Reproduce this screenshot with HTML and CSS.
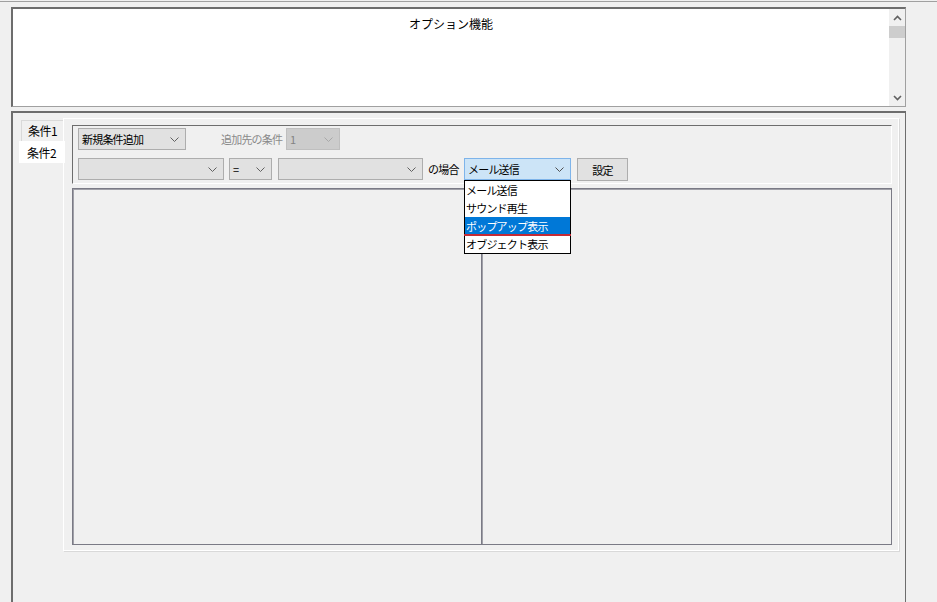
FILE: index.html
```html
<!DOCTYPE html>
<html lang="ja">
<head>
    <meta charset="UTF-8">
    <title>オプション機能</title>
    <link rel="stylesheet" href="styles.css">
</head>
<body>

<div class="top-line"></div>

<!-- Option text box -->
<div class="option-box">
    <div class="option-text">オプション機能</div>
    <div class="scrollbar">
        <div class="scroll-btn">
            <svg width="9" height="6" viewBox="0 0 9 6"><polyline points="1,5 4.5,1.5 8,5" fill="none" stroke="#606060" stroke-width="1.6"/></svg>
        </div>
        <div class="scroll-thumb"></div>
        <div class="scroll-track"></div>
        <div class="scroll-btn">
            <svg width="9" height="6" viewBox="0 0 9 6"><polyline points="1,1 4.5,4.5 8,1" fill="none" stroke="#606060" stroke-width="1.6"/></svg>
        </div>
    </div>
</div>

<!-- Condition panel -->
<div class="panel">
    <div class="tabs">
        <div class="tab">条件1</div>
        <div class="tab active">条件2</div>
    </div>

    <div class="tab-page">
        <div class="group">
            <div class="row">
                <div class="combo w-new"><span class="combo-text">新規条件追加</span><svg class="chev" width="9" height="5" viewBox="0 0 9 5"><polyline points="0.5,0.5 4.5,4.5 8.5,0.5" fill="none" stroke="#606060"/></svg></div>
                <span class="label disabled-label">追加先の条件</span>
                <div class="combo disabled w-target"><span class="combo-text">1</span><svg class="chev" width="9" height="5" viewBox="0 0 9 5"><polyline points="0.5,0.5 4.5,4.5 8.5,0.5" fill="none" stroke="#a8a8a8"/></svg></div>
            </div>
            <div class="row row-second">
                <div class="combo w-field"><span class="combo-text"></span><svg class="chev" width="9" height="5" viewBox="0 0 9 5"><polyline points="0.5,0.5 4.5,4.5 8.5,0.5" fill="none" stroke="#606060"/></svg></div>
                <div class="combo w-op"><span class="combo-text">=</span><svg class="chev" width="9" height="5" viewBox="0 0 9 5"><polyline points="0.5,0.5 4.5,4.5 8.5,0.5" fill="none" stroke="#606060"/></svg></div>
                <div class="combo w-value"><span class="combo-text"></span><svg class="chev" width="9" height="5" viewBox="0 0 9 5"><polyline points="0.5,0.5 4.5,4.5 8.5,0.5" fill="none" stroke="#606060"/></svg></div>
                <span class="label w-case">の場合</span>
                <div class="combo focused w-action">
                    <span class="combo-text">メール送信</span><svg class="chev" width="9" height="5" viewBox="0 0 9 5"><polyline points="0.5,0.5 4.5,4.5 8.5,0.5" fill="none" stroke="#505050"/></svg>
                    <!-- open dropdown list -->
                    <div class="dropdown">
                        <div class="option">メール送信</div>
                        <div class="option">サウンド再生</div>
                        <div class="option selected">ポップアップ表示<span class="mark"></span></div>
                        <div class="option">オブジェクト表示</div>
                    </div>
                </div>
                <button class="btn">設定</button>
            </div>
        </div>

        <div class="split">
            <div class="pane pane-left"></div>
            <div class="pane"></div>
        </div>
    </div>
</div>

</body>
</html>
```

FILE: styles.css
```css
body {
    margin: 0;
    width: 937px;
    height: 602px;
    overflow: hidden;
    background-color: #f0f0f0;
    color: #000;
    font-family: "Noto Sans CJK JP", "Noto Sans", sans-serif;
    font-size: 11px;
}
.top-line {
    margin-top: 1px;
    border-top: 1px solid #a0a0a0;
}

/* option text box */
.option-box {
    display: flex;
    box-sizing: border-box;
    width: 895px;
    height: 100px;
    margin: 5px 0 0 11px;
    background-color: #fff;
    border-style: solid;
    border-width: 2px 1px 1px 2px;
    border-color: #6d6d6d #a0a0a0 #a0a0a0 #6d6d6d;
}
.option-text {
    flex: 1;
    text-align: center;
    padding-top: 7px;
    font-size: 12px;
    line-height: 16px;
}
.scrollbar {
    width: 16px;
    display: flex;
    flex-direction: column;
    background-color: #f0f0f0;
}
.scroll-btn {
    height: 17px;
    display: flex;
    align-items: center;
    justify-content: center;
}
.scroll-thumb {
    height: 12px;
    background-color: #cdcdcd;
}
.scroll-track {
    flex: 1;
}

/* condition panel */
.panel {
    display: flex;
    box-sizing: border-box;
    width: 895px;
    height: 500px;
    margin: 4px 0 0 11px;
    border-style: solid;
    border-width: 2px 1px 0 2px;
    border-color: #6d6d6d #6d6d6d #6d6d6d #6d6d6d;
}
.tabs {
    width: 50px;
    padding-top: 7px;
    position: relative;
    z-index: 1;
}
.tab {
    box-sizing: border-box;
    width: 42px;
    height: 21px;
    margin-left: 8px;
    padding-left: 6px;
    line-height: 20px;
    font-size: 12px;
    letter-spacing: -0.5px;
    background-color: #f0f0f0;
    border: 1px solid #d9d9d9;
    border-right: none;
    border-bottom: none;
}
.tab.active {
    width: 46px;
    height: 22px;
    margin-left: 6px;
    padding-left: 7px;
    line-height: 21px;
    background-color: #fff;
    border-color: #fff;
}
.tab-page {
    box-sizing: border-box;
    width: 836px;
    height: 433px;
    margin-top: 5px;
    padding: 6px 0 0 8px;
    border: 1px solid #fff;
    box-shadow: 1px 1px 0 #d9d9d9;
}
.group {
    box-sizing: border-box;
    width: 820px;
    height: 59px;
    padding: 2px 0 0 5px;
    border: 1px solid;
    border-color: #6d6d6d #fff #fff #6d6d6d;
}
.row {
    display: flex;
    align-items: flex-start;
    height: 22px;
}
.row-second {
    margin-top: 8px;
}
.label {
    line-height: 22px;
    white-space: nowrap;
    letter-spacing: -0.8px;
}
.disabled-label {
    width: 61px;
    margin: 0 4px 0 35px;
    color: #8a8a8a;
}
.w-case {
    width: 31px;
    margin: 0 5px;
}

/* combo boxes */
.combo {
    position: relative;
    box-sizing: border-box;
    display: flex;
    align-items: center;
    height: 22px;
    background-color: #e1e1e1;
    border: 1px solid #adadad;
}
.combo-text {
    flex: 1;
    padding-left: 3px;
    white-space: nowrap;
    letter-spacing: -0.8px;
}
.chev {
    margin-right: 6px;
}
.combo.disabled {
    background-color: #cccccc;
    border-color: #bfbfbf;
    color: #838383;
}
.combo.focused {
    background-color: #cce4f7;
    border-color: #7eb4ea;
}
.w-new { width: 108px; }
.w-target { width: 54px; }
.w-field { width: 146px; }
.w-op { width: 43px; margin-left: 5px; }
.w-value { width: 145px; margin-left: 6px; }
.w-action { width: 107px; }

.dropdown {
    position: absolute;
    top: 21px;
    left: -1px;
    z-index: 5;
    box-sizing: border-box;
    width: 107px;
    background-color: #fff;
    border: 1px solid #000;
}
.option {
    position: relative;
    height: 18px;
    line-height: 18px;
    padding-left: 1px;
    white-space: nowrap;
    letter-spacing: -0.8px;
}
.option.selected {
    background-color: #0078d7;
    color: #fff;
}
.mark {
    position: absolute;
    left: -1px;
    right: -1px;
    bottom: -1px;
    height: 2px;
    background-color: #c42b36;
}

.btn {
    box-sizing: border-box;
    width: 51px;
    height: 23px;
    margin-left: 6px;
    padding: 0;
    background-color: #e1e1e1;
    border: 1px solid #adadad;
    font-family: inherit;
    font-size: 11px;
    letter-spacing: -0.8px;
    color: #000;
}

/* split panel */
.split {
    display: flex;
    box-sizing: border-box;
    width: 820px;
    height: 357px;
    margin-top: 4px;
    border: 1px solid #7a7a85;
    box-shadow: inset 1px 1px 0 #a0a0a8;
}
.pane {
    flex: 1;
}
.pane-left {
    flex: none;
    width: 408px;
    border-right: 1px solid #7a7a85;
    box-shadow: 1px 0 0 #a0a0a8;
}
```
